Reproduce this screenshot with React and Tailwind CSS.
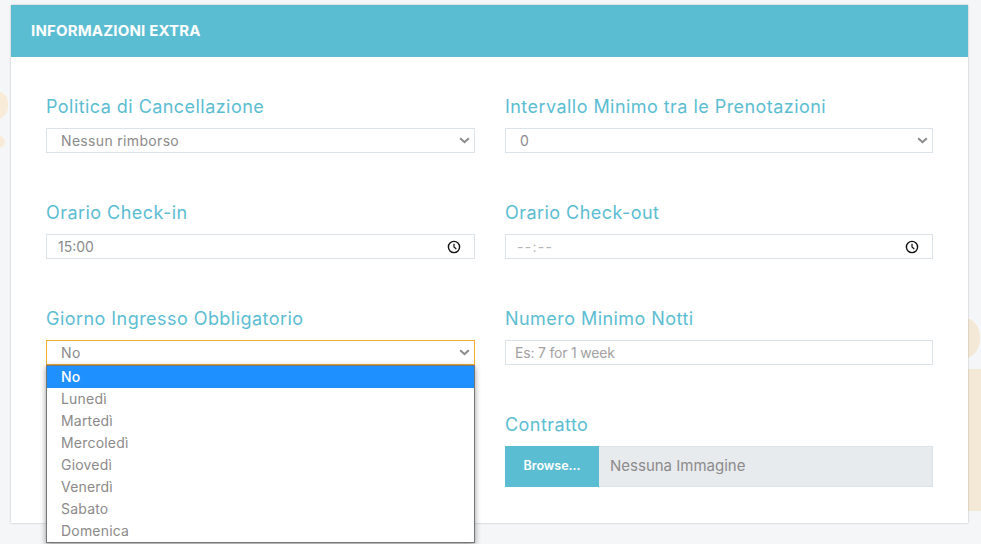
const font = "font-['Inter','Noto_Sans',sans-serif]";

function Chevron() {
  return (
    <svg width="11" height="7" viewBox="0 0 11 7" className="shrink-0">
      <path d="M1.2 1.2 5.5 5.2 9.8 1.2" fill="none" stroke="#8a8a8a" strokeWidth="2" />
    </svg>
  );
}

function Clock() {
  return (
    <svg width="14" height="14" viewBox="0 0 14 14" className="shrink-0">
      <circle cx="7" cy="7" r="5.6" fill="none" stroke="#111" strokeWidth="1.4" />
      <path d="M7 3.8V7l2.3 2" fill="none" stroke="#111" strokeWidth="1.2" />
    </svg>
  );
}

function Label({ children }) {
  return <div className="h-[25px] text-[18px] leading-[25px] tracking-[0.45px] text-[#5bbdd2] mb-[9px]">{children}</div>;
}

function SelectBox({ value, focus }) {
  return (
    <div className={`h-[25px] border flex items-center justify-between pl-[14px] pr-[4px] text-sm tracking-[0.33px] text-[#8c8a8a] ${focus ? "border-[#f0ad32]" : "border-[#dbe2ea]"}`}>
      <span>{value}</span>
      <Chevron />
    </div>
  );
}

function TimeBox({ value, empty }) {
  return (
    <div className={`h-[25px] border border-[#dbe2ea] flex items-center justify-between pl-[11px] pr-[13px] text-sm ${empty ? "text-[#b5b3b3] tracking-[1.3px] pl-[10px]" : "text-[#8c8a8a]"}`}>
      <span>{value}</span>
      <Clock />
    </div>
  );
}

const days = ["Lunedì", "Martedì", "Mercoledì", "Giovedì", "Venerdì", "Sabato", "Domenica"];

export default function App() {
  return (
    <div className={`relative h-[544px] w-[981px] overflow-hidden bg-[#f5f6f8] pt-[5px] pl-[11px] ${font}`}>
      {/* blobs behind the card */}
      <div className="absolute left-[-16px] top-[91px] h-[28px] w-[24px] rounded-full bg-[#f8ecd9]" />
      <div className="absolute left-[-8px] top-[136px] h-[12px] w-[13px] rounded-full bg-[#f8ecd9]" />
      <div className="absolute left-[950px] top-[318px] h-[40px] w-[30px] rounded-[50%] bg-[#f4e8d6]" />
      <div className="absolute left-[950px] top-[369px] h-[142px] w-[40px] rounded-l-[6px] bg-[#f4e8d6]" />

      <div className="relative h-[518px] w-[957px] bg-white shadow-[0_0_2px_rgba(0,0,0,0.25)]">
        <div className="h-[52px] bg-[#5bbdd2] pl-[20px] flex items-center text-[15px] tracking-[0.17px] font-bold text-white">
          INFORMAZIONI EXTRA
        </div>
        <div className="grid grid-cols-[429px_428px] gap-x-[30px] pl-[35px] pt-[37px]">
          <div className="h-[106px]">
            <Label>Politica di Cancellazione</Label>
            <SelectBox value="Nessun rimborso" />
          </div>
          <div className="h-[106px]">
            <Label>Intervallo Minimo tra le Prenotazioni</Label>
            <SelectBox value="0" />
          </div>
          <div className="h-[106px]">
            <Label>Orario Check-in</Label>
            <TimeBox value="15:00" />
          </div>
          <div className="h-[106px]">
            <Label>Orario Check-out</Label>
            <TimeBox value="--:--" empty />
          </div>
          <div className="relative h-[106px]">
            <Label>Giorno Ingresso Obbligatorio</Label>
            <SelectBox value="No" focus />
            {/* open dropdown */}
            <div className="absolute left-0 top-[59px] z-10 w-[429px] border border-[#767676] bg-white text-sm tracking-[0.2px] text-[#8c8a8a] shadow-[0_2px_6px_rgba(0,0,0,0.4)]">
              <div className="h-[22px] bg-[#1e90ff] pl-[14px] leading-[21px] font-medium text-white">No</div>
              {days.map((d) => (
                <div key={d} className="h-[22px] pl-[14px] leading-[21px]">{d}</div>
              ))}
            </div>
          </div>
          <div className="h-[106px]">
            <Label>Numero Minimo Notti</Label>
            <div className="h-[25px] border border-[#dbe2ea] flex items-center pl-[9px] text-sm tracking-[-0.2px] text-[#a3a1a1]">Es: 7 for 1 week</div>
          </div>
          <div />
          <div>
            <Label>Contratto</Label>
            <div className="h-[41px] flex border border-[#dbe2ea] bg-[#e8ebee] text-[15px] text-[#8c8a8a]">
              <div className="w-[94px] -my-px -ml-px bg-[#5bbdd2] flex items-center justify-center text-[12.5px] font-semibold text-white">Browse...</div>
              <div className="flex items-center pl-[11px]">Nessuna Immagine</div>
            </div>
          </div>
        </div>
      </div>
    </div>
  );
}
